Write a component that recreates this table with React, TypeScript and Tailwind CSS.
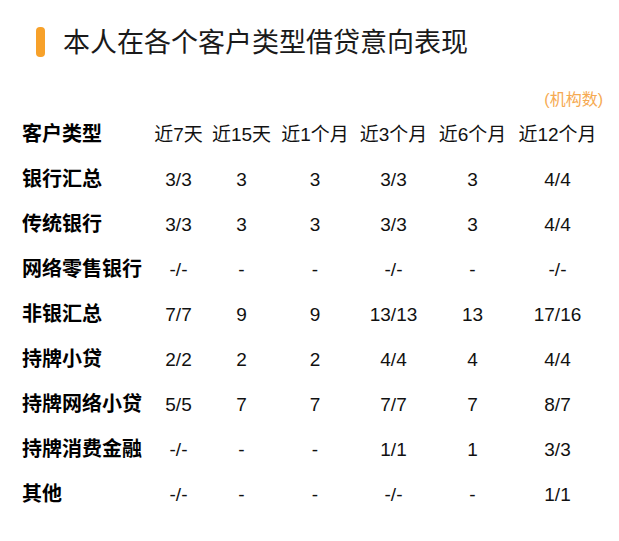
import React from "react";

const cols = ["近7天", "近15天", "近1个月", "近3个月", "近6个月", "近12个月"];
const rows: [string, string[]][] = [
  ["银行汇总", ["3/3", "3", "3", "3/3", "3", "4/4"]],
  ["传统银行", ["3/3", "3", "3", "3/3", "3", "4/4"]],
  ["网络零售银行", ["-/-", "-", "-", "-/-", "-", "-/-"]],
  ["非银汇总", ["7/7", "9", "9", "13/13", "13", "17/16"]],
  ["持牌小贷", ["2/2", "2", "2", "4/4", "4", "4/4"]],
  ["持牌网络小贷", ["5/5", "7", "7", "7/7", "7", "8/7"]],
  ["持牌消费金融", ["-/-", "-", "-", "1/1", "1", "3/3"]],
  ["其他", ["-/-", "-", "-", "-/-", "-", "1/1"]],
];

export default function App() {
  return (
    <div
      className="w-[619px] h-[541px] bg-white text-[#111] overflow-hidden"
      style={{ fontFamily: '"Liberation Sans", "Noto Sans CJK SC", sans-serif' }}
    >
      <div className="pt-[26px] pl-[36px] flex items-start">
        <div className="mt-[1px] w-[9px] h-[30px] rounded-[4px] bg-[#f7a12a]" />
        <div className="ml-[18px] text-[27px] leading-[34px] text-[#1a1a1a]">
          本人在各个客户类型借贷意向表现
        </div>
      </div>
      <div className="mt-[28px] pr-[16px] flex justify-end text-[16px] leading-[24px] text-[#f6aa52]">
        (机构数)
      </div>
      <div className="pl-[22px] grid grid-cols-[128px_57px_69px_78px_79px_79px_91px] text-[19px] leading-[45px]">
        <div className="font-bold text-[20px] text-black">客户类型</div>
        {cols.map((c) => (
          <div key={c} className="text-center whitespace-nowrap">
            {c}
          </div>
        ))}
        {rows.map(([label, vals]) => (
          <React.Fragment key={label}>
            <div className="font-bold text-[20px] text-black whitespace-nowrap">{label}</div>
            {vals.map((v, i) => (
              <div key={i} className="text-center">
                {v}
              </div>
            ))}
          </React.Fragment>
        ))}
      </div>
    </div>
  );
}
